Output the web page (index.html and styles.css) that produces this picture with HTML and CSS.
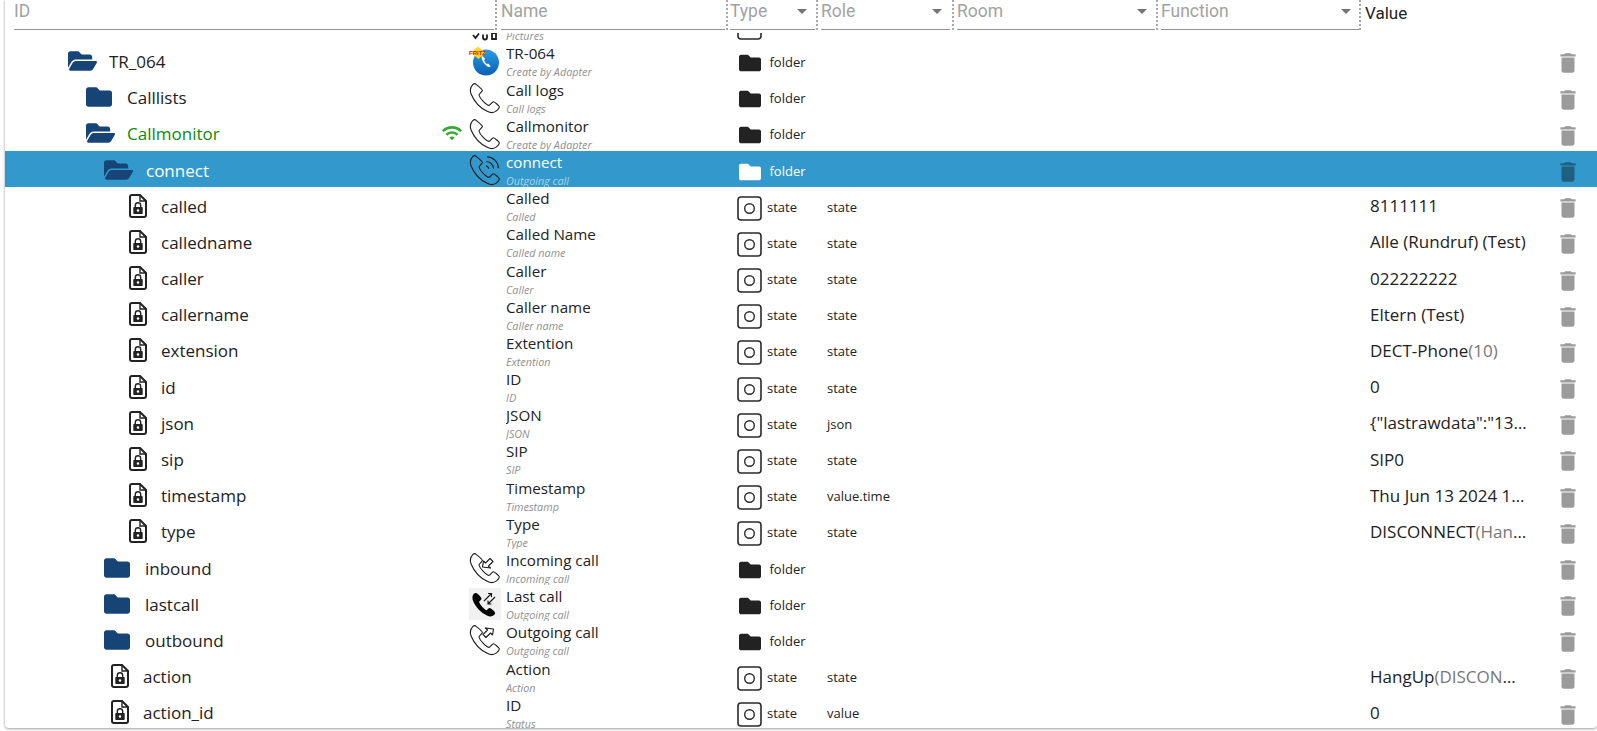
FILE: index.html
```html
<!DOCTYPE html>
<html lang="en">
<head>
<meta charset="utf-8">
<title>Objects</title>
<link rel="stylesheet" href="styles.css">
</head>
<body>
<svg class="defs" width="0" height="0" aria-hidden="true">
  <defs>
    <symbol id="folder" viewBox="0 0 512 512"><path d="M464 128H272l-64-64H48C21.49 64 0 85.49 0 112v288c0 26.51 21.49 48 48 48h416c26.51 0 48-21.49 48-48V176c0-26.51-21.49-48-48-48z"/></symbol>
    <symbol id="open" viewBox="0 0 576 512"><path d="M572.694 292.093L500.27 416.248A63.997 63.997 0 0 1 444.989 448H45.025c-18.523 0-30.064-20.093-20.731-36.093l72.424-124.155A64 64 0 0 1 152 256h399.964c18.523 0 30.064 20.093 20.73 36.093zM152 224h328v-48c0-26.51-21.49-48-48-48H272l-64-64H48C21.49 64 0 85.49 0 112v278.046l69.077-118.418C86.214 242.25 118.25 224 152 224z"/></symbol>
    <symbol id="file" viewBox="0 0 18 24"><path d="M3 1h8l6 6v14a2 2 0 0 1-2 2H3a2 2 0 0 1-2-2V3a2 2 0 0 1 2-2z" fill="none" stroke="currentColor" stroke-width="2"/><path d="M11 1v6h6" fill="none" stroke="currentColor" stroke-width="1.4"/><path d="M6.3 13v-1.5a2.7 2.7 0 0 1 5.4 0V13" fill="none" stroke="currentColor" stroke-width="1.4"/><path fill-rule="evenodd" d="M5 13h8a.7.7 0 0 1 .7.7v5.6a.7.7 0 0 1-.7.7H5a.7.7 0 0 1-.7-.7v-5.6A.7.7 0 0 1 5 13zm4 2.2a1.3 1.3 0 1 0 0 2.6 1.3 1.3 0 0 0 0-2.6z" fill="currentColor"/></symbol>
    <symbol id="state" viewBox="0 0 25 25"><rect x="1" y="1" width="23" height="23" rx="3" fill="none" stroke="currentColor" stroke-width="1.6"/><circle cx="12.5" cy="12.5" r="4.8" fill="none" stroke="currentColor" stroke-width="1.4"/></symbol>
    <symbol id="trash" viewBox="0 0 24 24"><path d="M6 19c0 1.1.9 2 2 2h8c1.1 0 2-.9 2-2V7H6v12zM19 4h-3.5l-1-1h-5l-1 1H5v2h14V4z"/></symbol>
    <symbol id="phone" viewBox="0 0 32 32"><path d="M7.2 2.3c-1-.9-2.3-.8-3.2.1C1.300 5 .6 8.400 2.200 12.200c3 7.300 9 13.900 16.500 17.400 3.200 1.500 6.200 1.300 8.800-.7 1.800-1.400 2.900-3.300 2.800-4.100-.1-.8-4.600-4.900-5.800-5.100-1.300-.2-3.500 3.900-4.700 3.700-3-.5-9.100-7.200-9.800-10.400-.2-1.200 3.500-3.500 3.400-4.600C13.300 7.200 9.300 4.100 7.200 2.300z" fill="none" stroke="currentColor" stroke-width="1.100" stroke-linejoin="round"/></symbol>
    <symbol id="arrow-in" viewBox="0 0 32 32"><path d="M13.500 15l1-6 2 2 4.500-4.500 3 3-4.500 4.500 2 2z" fill="none" stroke="currentColor" stroke-width="1.100" stroke-linejoin="round"/></symbol>
    <symbol id="arrow-out" viewBox="0 0 32 32"><path d="M24.500 5l-1 6-2-2-4.500 4.500-3-3L18.500 6l-2-2z" fill="none" stroke="currentColor" stroke-width="1.100" stroke-linejoin="round"/></symbol>
  </defs>
</svg>
<main class="card">
  <header class="head">
    <div class="hf hf-id"><span class="hl">ID</span></div><i class="rz rz-id"></i>
    <div class="hf hf-name"><span class="hl">Name</span></div><i class="rz rz-name"></i>
    <div class="hf hf-type"><span class="hl">Type</span><b class="caret"></b></div><i class="rz rz-type"></i>
    <div class="hf hf-role"><span class="hl">Role</span><b class="caret"></b></div><i class="rz rz-role"></i>
    <div class="hf hf-room"><span class="hl">Room</span><b class="caret"></b></div><i class="rz rz-room"></i>
    <div class="hf hf-func"><span class="hl">Function</span><b class="caret"></b></div><i class="rz rz-func"></i>
    <div class="hv">Value</div>
  </header>
  <section class="list">
    <div class="rows">

      <div class="row">
        <div class="c-id"></div><div class="c-st"></div>
        <div class="c-ic"><svg class="ic32" viewBox="0 0 32 32"><path d="M4 26l2.500 3 3.500-4.500M14 25.500v3a2 2 0 0 0 4 0v-3M23 24h4v6h-4z" fill="none" stroke="#222" stroke-width="1.800"/></svg></div>
        <div class="c-nm"><div class="t t-empty"></div><div class="s s-clip">Pictures</div></div>
        <div class="c-ty"><svg class="st"><use href="#state"/></svg><span class="stt"></span></div>
        <div class="c-ro"></div><div class="c-rm"></div><div class="c-fn"></div><div class="c-va"></div>
        <div class="c-tr"></div>
      </div>

      <div class="row">
        <div class="c-id l0"><svg class="fo-open"><use href="#open"/></svg><span class="lbl">TR_064</span></div><div class="c-st"></div>
        <div class="c-ic"><svg class="ic32" viewBox="0 0 32 32"><defs><linearGradient id="blue" x1="0" y1="0" x2="0" y2="1"><stop offset="0" stop-color="#2a9ce8"/><stop offset="1" stop-color="#0a5fb0"/></linearGradient></defs><circle cx="17" cy="17.500" r="13" fill="url(#blue)"/><path d="M13.500 11c-1.200.8-1 2.500-.2 4.200 1 2.300 3 5 5.200 6.300 1.300.8 2.700.6 3.300-.2l-2.600-2.900-1.300.7c-1.300-.8-2.500-2.800-2.800-4.300l1.100-.9z" fill="#fff"/><path d="M9 1.500l7.500 6.500-7 6-7.500-6.500z" fill="#ffd91a"/><text class="fritz" x="0" y="9.500">FRITZ</text></svg></div>
        <div class="c-nm"><div class="t">TR-064</div><div class="s">Create by Adapter</div></div>
        <div class="c-ty"><svg class="fo-ty"><use href="#folder"/></svg><span class="fot">folder</span></div>
        <div class="c-ro"></div><div class="c-rm"></div><div class="c-fn"></div><div class="c-va"></div>
        <div class="c-tr"><svg class="tr"><use href="#trash"/></svg></div>
      </div>

      <div class="row">
        <div class="c-id l1"><svg class="fo"><use href="#folder"/></svg><span class="lbl">Calllists</span></div><div class="c-st"></div>
        <div class="c-ic"><svg class="ic32"><use href="#phone"/></svg></div>
        <div class="c-nm"><div class="t">Call logs</div><div class="s">Call logs</div></div>
        <div class="c-ty"><svg class="fo-ty"><use href="#folder"/></svg><span class="fot">folder</span></div>
        <div class="c-ro"></div><div class="c-rm"></div><div class="c-fn"></div><div class="c-va"></div>
        <div class="c-tr"><svg class="tr"><use href="#trash"/></svg></div>
      </div>

      <div class="row">
        <div class="c-id l1"><svg class="fo-open"><use href="#open"/></svg><span class="lbl live">Callmonitor</span></div>
        <div class="c-st"><svg class="wifi" viewBox="0 0 24 24"><path d="M1 9l2 2c4.970-4.970 13.030-4.970 18 0l2-2C16.930 2.930 7.070 2.930 1 9zm8 8l3 3 3-3c-1.650-1.660-4.340-1.660-6 0zm-4-4l2 2c2.760-2.760 7.240-2.760 10 0l2-2C15.140 9.140 8.870 9.140 5 13z"/></svg></div>
        <div class="c-ic"><svg class="ic32"><use href="#phone"/></svg></div>
        <div class="c-nm"><div class="t">Callmonitor</div><div class="s">Create by Adapter</div></div>
        <div class="c-ty"><svg class="fo-ty"><use href="#folder"/></svg><span class="fot">folder</span></div>
        <div class="c-ro"></div><div class="c-rm"></div><div class="c-fn"></div><div class="c-va"></div>
        <div class="c-tr"><svg class="tr"><use href="#trash"/></svg></div>
      </div>

      <div class="row sel">
        <div class="c-id l2"><svg class="fo-open"><use href="#open"/></svg><span class="lbl">connect</span></div><div class="c-st"></div>
        <div class="c-ic"><svg class="ic32" viewBox="0 0 32 32"><use href="#phone"/><path d="M17.500 7.500c3.800.2 6.800 3.200 7 7M18 2.800c6.300.3 11 5 11.400 11.400M17 12c1.500.2 2.600 1.300 2.800 2.800" fill="none" stroke="currentColor" stroke-width="1.100"/></svg></div>
        <div class="c-nm"><div class="t">connect</div><div class="s">Outgoing call</div></div>
        <div class="c-ty"><svg class="fo-ty"><use href="#folder"/></svg><span class="fot">folder</span></div>
        <div class="c-ro"></div><div class="c-rm"></div><div class="c-fn"></div><div class="c-va"></div>
        <div class="c-tr"><svg class="tr"><use href="#trash"/></svg></div>
      </div>

      <div class="row">
        <div class="c-id l3"><svg class="fi"><use href="#file"/></svg><span class="lbl">called</span></div><div class="c-st"></div><div class="c-ic"></div>
        <div class="c-nm"><div class="t">Called</div><div class="s">Called</div></div>
        <div class="c-ty"><svg class="st"><use href="#state"/></svg><span class="stt">state</span></div>
        <div class="c-ro">state</div><div class="c-rm"></div><div class="c-fn"></div><div class="c-va">8111111</div>
        <div class="c-tr"><svg class="tr"><use href="#trash"/></svg></div>
      </div>

      <div class="row">
        <div class="c-id l3"><svg class="fi"><use href="#file"/></svg><span class="lbl">calledname</span></div><div class="c-st"></div><div class="c-ic"></div>
        <div class="c-nm"><div class="t">Called Name</div><div class="s">Called name</div></div>
        <div class="c-ty"><svg class="st"><use href="#state"/></svg><span class="stt">state</span></div>
        <div class="c-ro">state</div><div class="c-rm"></div><div class="c-fn"></div><div class="c-va">Alle (Rundruf) (Test)</div>
        <div class="c-tr"><svg class="tr"><use href="#trash"/></svg></div>
      </div>

      <div class="row">
        <div class="c-id l3"><svg class="fi"><use href="#file"/></svg><span class="lbl">caller</span></div><div class="c-st"></div><div class="c-ic"></div>
        <div class="c-nm"><div class="t">Caller</div><div class="s">Caller</div></div>
        <div class="c-ty"><svg class="st"><use href="#state"/></svg><span class="stt">state</span></div>
        <div class="c-ro">state</div><div class="c-rm"></div><div class="c-fn"></div><div class="c-va">022222222</div>
        <div class="c-tr"><svg class="tr"><use href="#trash"/></svg></div>
      </div>

      <div class="row">
        <div class="c-id l3"><svg class="fi"><use href="#file"/></svg><span class="lbl">callername</span></div><div class="c-st"></div><div class="c-ic"></div>
        <div class="c-nm"><div class="t">Caller name</div><div class="s">Caller name</div></div>
        <div class="c-ty"><svg class="st"><use href="#state"/></svg><span class="stt">state</span></div>
        <div class="c-ro">state</div><div class="c-rm"></div><div class="c-fn"></div><div class="c-va">Eltern (Test)</div>
        <div class="c-tr"><svg class="tr"><use href="#trash"/></svg></div>
      </div>

      <div class="row">
        <div class="c-id l3"><svg class="fi"><use href="#file"/></svg><span class="lbl">extension</span></div><div class="c-st"></div><div class="c-ic"></div>
        <div class="c-nm"><div class="t">Extention</div><div class="s">Extention</div></div>
        <div class="c-ty"><svg class="st"><use href="#state"/></svg><span class="stt">state</span></div>
        <div class="c-ro">state</div><div class="c-rm"></div><div class="c-fn"></div><div class="c-va">DECT-Phone<span class="vx">(10)</span></div>
        <div class="c-tr"><svg class="tr"><use href="#trash"/></svg></div>
      </div>

      <div class="row">
        <div class="c-id l3"><svg class="fi"><use href="#file"/></svg><span class="lbl">id</span></div><div class="c-st"></div><div class="c-ic"></div>
        <div class="c-nm"><div class="t">ID</div><div class="s">ID</div></div>
        <div class="c-ty"><svg class="st"><use href="#state"/></svg><span class="stt">state</span></div>
        <div class="c-ro">state</div><div class="c-rm"></div><div class="c-fn"></div><div class="c-va">0</div>
        <div class="c-tr"><svg class="tr"><use href="#trash"/></svg></div>
      </div>

      <div class="row">
        <div class="c-id l3"><svg class="fi"><use href="#file"/></svg><span class="lbl">json</span></div><div class="c-st"></div><div class="c-ic"></div>
        <div class="c-nm"><div class="t">JSON</div><div class="s">JSON</div></div>
        <div class="c-ty"><svg class="st"><use href="#state"/></svg><span class="stt">state</span></div>
        <div class="c-ro">json</div><div class="c-rm"></div><div class="c-fn"></div><div class="c-va">{"lastrawdata":"13241234</div>
        <div class="c-tr"><svg class="tr"><use href="#trash"/></svg></div>
      </div>

      <div class="row">
        <div class="c-id l3"><svg class="fi"><use href="#file"/></svg><span class="lbl">sip</span></div><div class="c-st"></div><div class="c-ic"></div>
        <div class="c-nm"><div class="t">SIP</div><div class="s">SIP</div></div>
        <div class="c-ty"><svg class="st"><use href="#state"/></svg><span class="stt">state</span></div>
        <div class="c-ro">state</div><div class="c-rm"></div><div class="c-fn"></div><div class="c-va">SIP0</div>
        <div class="c-tr"><svg class="tr"><use href="#trash"/></svg></div>
      </div>

      <div class="row">
        <div class="c-id l3"><svg class="fi"><use href="#file"/></svg><span class="lbl">timestamp</span></div><div class="c-st"></div><div class="c-ic"></div>
        <div class="c-nm"><div class="t">Timestamp</div><div class="s">Timestamp</div></div>
        <div class="c-ty"><svg class="st"><use href="#state"/></svg><span class="stt">state</span></div>
        <div class="c-ro">value.time</div><div class="c-rm"></div><div class="c-fn"></div><div class="c-va">Thu Jun 13 2024 12:00:00</div>
        <div class="c-tr"><svg class="tr"><use href="#trash"/></svg></div>
      </div>

      <div class="row">
        <div class="c-id l3"><svg class="fi"><use href="#file"/></svg><span class="lbl">type</span></div><div class="c-st"></div><div class="c-ic"></div>
        <div class="c-nm"><div class="t">Type</div><div class="s">Type</div></div>
        <div class="c-ty"><svg class="st"><use href="#state"/></svg><span class="stt">state</span></div>
        <div class="c-ro">state</div><div class="c-rm"></div><div class="c-fn"></div><div class="c-va">DISCONNECT<span class="vx">(HangUp)</span></div>
        <div class="c-tr"><svg class="tr"><use href="#trash"/></svg></div>
      </div>

      <div class="row">
        <div class="c-id l2b"><svg class="fo"><use href="#folder"/></svg><span class="lbl">inbound</span></div><div class="c-st"></div>
        <div class="c-ic"><svg class="ic32"><use href="#phone"/><use href="#arrow-in"/></svg></div>
        <div class="c-nm"><div class="t">Incoming call</div><div class="s">Incoming call</div></div>
        <div class="c-ty"><svg class="fo-ty"><use href="#folder"/></svg><span class="fot">folder</span></div>
        <div class="c-ro"></div><div class="c-rm"></div><div class="c-fn"></div><div class="c-va"></div>
        <div class="c-tr"><svg class="tr"><use href="#trash"/></svg></div>
      </div>

      <div class="row">
        <div class="c-id l2b"><svg class="fo"><use href="#folder"/></svg><span class="lbl">lastcall</span></div><div class="c-st"></div>
        <div class="c-ic"><svg class="ic32 lastc" viewBox="0 0 32 32"><rect width="32" height="32" fill="#f1f1f1"/><path d="M8 5.500c-1.300-.9-2.300-.5-3.100.3C3 7.600 3 10.500 4.300 13.500c2.700 6 7.500 11 13.600 14 2.800 1.300 5.300 1.200 7.100-.5.800-.8 1.400-2 .9-2.800-1-1.600-3-3-4.500-4-1-.6-2-.2-3 1.300-.5.700-1 .9-1.800.4-2.500-1.600-5.200-4.700-6.300-7.300-.3-.8 0-1.300.7-1.800 1.400-1 1.800-2 1.200-3C11 8 9.500 6.500 8 5.500z" fill="#000"/><path d="M15 13l7-7M19 5.500h3.500V9M26 9l-7 7M19 12.500V16h3.500" fill="none" stroke="#111" stroke-width="1.100"/></svg></div>
        <div class="c-nm"><div class="t">Last call</div><div class="s">Outgoing call</div></div>
        <div class="c-ty"><svg class="fo-ty"><use href="#folder"/></svg><span class="fot">folder</span></div>
        <div class="c-ro"></div><div class="c-rm"></div><div class="c-fn"></div><div class="c-va"></div>
        <div class="c-tr"><svg class="tr"><use href="#trash"/></svg></div>
      </div>

      <div class="row">
        <div class="c-id l2b"><svg class="fo"><use href="#folder"/></svg><span class="lbl">outbound</span></div><div class="c-st"></div>
        <div class="c-ic"><svg class="ic32"><use href="#phone"/><use href="#arrow-out"/></svg></div>
        <div class="c-nm"><div class="t">Outgoing call</div><div class="s">Outgoing call</div></div>
        <div class="c-ty"><svg class="fo-ty"><use href="#folder"/></svg><span class="fot">folder</span></div>
        <div class="c-ro"></div><div class="c-rm"></div><div class="c-fn"></div><div class="c-va"></div>
        <div class="c-tr"><svg class="tr"><use href="#trash"/></svg></div>
      </div>

      <div class="row">
        <div class="c-id l2f"><svg class="fi"><use href="#file"/></svg><span class="lbl">action</span></div><div class="c-st"></div><div class="c-ic"></div>
        <div class="c-nm"><div class="t">Action</div><div class="s">Action</div></div>
        <div class="c-ty"><svg class="st"><use href="#state"/></svg><span class="stt">state</span></div>
        <div class="c-ro">state</div><div class="c-rm"></div><div class="c-fn"></div><div class="c-va">HangUp<span class="vx">(DISCONNECT)</span></div>
        <div class="c-tr"><svg class="tr"><use href="#trash"/></svg></div>
      </div>

      <div class="row">
        <div class="c-id l2f"><svg class="fi"><use href="#file"/></svg><span class="lbl">action_id</span></div><div class="c-st"></div><div class="c-ic"></div>
        <div class="c-nm"><div class="t">ID</div><div class="s">Status</div></div>
        <div class="c-ty"><svg class="st"><use href="#state"/></svg><span class="stt">state</span></div>
        <div class="c-ro">value</div><div class="c-rm"></div><div class="c-fn"></div><div class="c-va">0</div>
        <div class="c-tr"><svg class="tr"><use href="#trash"/></svg></div>
      </div>

    </div>
  </section>
</main>
</body>
</html>
```
FILE: styles.css
```css
* { box-sizing: border-box; }
html, body { margin: 0; height: 100%; background: #fff; overflow: hidden; }
body { font-family: "Open Sans", "Noto Sans", sans-serif; color: #222; }
.defs { position: absolute; }

.card {
  margin-left: 5px;
  height: 728px;
  display: flex;
  flex-direction: column;
  background: #fff;
  border-radius: 0 0 4px 4px;
  box-shadow: 0 1px 3px rgba(0,0,0,.35), 0 0 2px rgba(0,0,0,.15);
  overflow: hidden;
}

/* header */
.head { flex: none; height: 33px; display: flex; align-items: flex-start; padding-left: 9px; background: #fff; position: relative; z-index: 1; font-family: Roboto, "Liberation Sans", sans-serif; }
.hf { height: 30px; border-bottom: 1px solid #949494; display: flex; align-items: center; justify-content: space-between; }
.hl { font-size: 17.500px; color: #a2a2a2; line-height: 22px; margin-top: -8px; }
.caret { width: 0; height: 0; border-left: 5px solid transparent; border-right: 5px solid transparent; border-top: 5px solid #757575; margin: -6px 8px 0 0; }
.rz { flex: none; width: 2px; height: 30px; border-left: 2px dotted #a8a8a8; }
.hf-id { width: 480px; }
.rz-id { margin: 0 4px 0 1px; }
.hf-name { width: 224px; }
.rz-name { margin: 0 2px 0 1px; }
.hf-type { width: 85px; }
.rz-type { margin: 0 3px 0 1px; }
.hf-role { width: 129px; }
.rz-role { margin: 0 3px 0 2px; }
.hf-room { width: 198px; }
.rz-room { margin: 0 3px 0 1px; }
.hf-func { width: 198px; }
.rz-func { margin: 0 4px 0 0; }
.hv { font-size: 17px; color: #222; line-height: 24px; margin-top: 1px; }

/* rows */
.list { flex: 1; min-height: 0; overflow: hidden; }
.rows { margin-top: -26.800px; }
.row {
  height: 36.200px;
  display: grid;
  grid-template-columns: 437px 24px 40px 225px 90px 136px 204px 204px 190px 30px;
  align-items: center;
}
.c-id { display: flex; align-items: center; height: 100%; white-space: nowrap; }
.lbl { font-size: 17px; line-height: 20px; color: #222; margin-top: 3px; }
.live { color: #0c8a0c; }
.l0 { padding-left: 63px; }
.l0 .lbl { margin-left: 12px; }
.l1 { padding-left: 81px; }
.l1 .lbl { margin-left: 15px; }
.l1 .fo-open + .lbl { margin-left: 12px; }
.l2 { padding-left: 99px; }
.l2 .lbl { margin-left: 13px; }
.l2b { padding-left: 99px; }
.l2b .lbl { margin-left: 15px; }
.l3 { padding-left: 124px; }
.l3 .lbl { margin-left: 14px; }
.l2f { padding-left: 106px; }
.l2f .lbl { margin-left: 14px; }

.fo { width: 26px; height: 26px; fill: #164477; flex: none; margin-top: 1px; }
.fo-open { width: 29px; height: 26px; fill: #164477; flex: none; margin-top: 1px; }
.fi { width: 18px; height: 24px; color: #222; flex: none; margin-top: 1px; }
.wifi { width: 22px; height: 22px; fill: #36a936; display: block; margin: 0 0 0 -1px; }

.c-ic { height: 100%; display: flex; align-items: center; color: #111; }
.ic32 { width: 32px; height: 32px; display: block; color: #1a1a1a; margin: 2px 0 0 3px; flex: none; overflow: hidden; }
.fritz { font-size: 6px; font-weight: 700; fill: #d8141c; font-family: "Liberation Sans", sans-serif; }

.c-nm { height: 100%; overflow: hidden; }
.t { font-size: 15.200px; line-height: 18px; margin-top: 2px; color: #222; white-space: nowrap; }
.t-empty { height: 18px; }
.s { font-size: 10.800px; line-height: 14px; margin-top: 3px; font-style: italic; color: #909090; white-space: nowrap; }

.c-ty { display: flex; align-items: center; height: 100%; padding-left: 6px; }
.st { width: 25px; height: 25px; color: #2a2a2a; flex: none; margin-top: 6px; }
.stt { font-size: 13px; margin: 3px 0 0 5px; color: #222; }
.fo-ty { width: 22px; height: 22px; fill: #222; flex: none; margin: 5px 0 0 1.500px; }
.fot { font-size: 13px; margin: 3px 0 0 9px; color: #222; }
.c-ro { font-size: 13px; padding-left: 6px; color: #222; margin-top: 3px; }
.c-va { font-size: 17px; padding-left: 5px; width: 162px; white-space: nowrap; overflow: hidden; text-overflow: ellipsis; color: #222; margin-top: 1px; }
.vx { color: #777; }
.c-tr { height: 100%; }
.tr { width: 26px; height: 26px; fill: #9b9b9b; display: block; margin: 8px 0 0 0; }

/* selected */
.sel { background: #3399cc; }
.sel .lbl, .sel .t, .sel .fot { color: #fff; }
.sel .s { color: #a9d3ea; }
.sel .fo-ty { fill: #fff; }
.sel .tr { fill: #215f80; }
```
